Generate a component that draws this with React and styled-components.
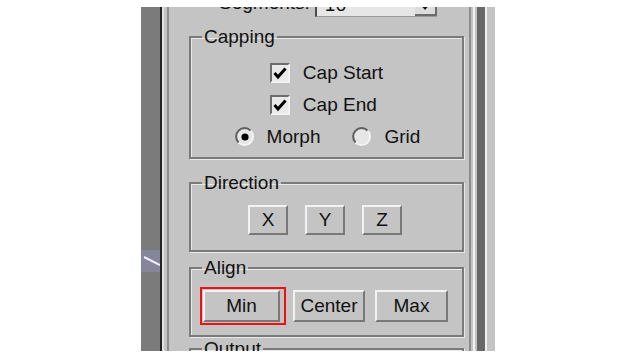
import React from 'react'
import styled, { createGlobalStyle } from 'styled-components'

const GlobalStyle = createGlobalStyle`
  html, body {
    margin: 0;
    padding: 0;
    background: #ffffff;
  }
  body {
    font-family: "Liberation Sans", Arial, sans-serif;
  }
`

const Page = styled.div`
  width: 635px;
  height: 364px;
  box-sizing: border-box;
  padding: 7px 0 0 141px;
  background: #ffffff;
`

const Panel = styled.div`
  display: flex;
  width: 354px;
  height: 344px;
  overflow: hidden;
  background: #c4c4c4;
`

const Viewport = styled.div`
  flex: none;
  width: 19px;
  display: flex;
  flex-direction: column;
  background: #7b7b7b;
`

const ViewportMark = styled.svg`
  margin-top: 243px;
  display: block;
`

const Divider = styled.div`
  flex: none;
  width: 2px;
  background: #232323;
`

const CommandPanel = styled.div`
  flex: 1;
  min-width: 0;
  border-right: 2px solid #f2f2f2;
  box-shadow: inset 2px 0 0 #e2e2e2;
`

const Rollout = styled.div`
  height: 100%;
  margin: 0 2px 0 5px;
  padding: 0 5px 0 20px;
  display: flex;
  flex-direction: column;
  border-left: 2px solid #8c8c8c;
  border-right: 2px solid #8c8c8c;
`

const Scrollbar = styled.div`
  flex: none;
  width: 8px;
  border-left: 2px solid #c4c4c4;
  background: #686868;
`

const RightStrip = styled.div`
  flex: none;
  width: 8px;
  border-left: 2px solid #f0f0f0;
  background: #c4c4c4;
`

const Text = styled.span`
  font-size: 19px;
  line-height: 20px;
  color: #111;
  white-space: nowrap;
`

const SpinnerRow = styled.div`
  flex: none;
  height: 20px;
  margin-top: -13px;
  padding-left: 30px;
  display: flex;
  align-items: flex-start;
  gap: 5px;
`

const SpinnerLabel = styled(Text)`
  margin-top: -1px;
`

const Field = styled.div`
  flex: none;
  width: 122px;
  height: 20px;
  margin-top: 3px;
  box-sizing: border-box;
  display: flex;
  align-items: flex-end;
  background: #e6e6e6;
  border-left: 2px solid #4a4a4a;
  border-bottom: 1px solid #9a9a9a;
`

const FieldValue = styled(Text)`
  flex: 1;
  padding-left: 8px;
  line-height: 18px;
  margin-bottom: 2px;
`

const DropButton = styled.div`
  width: 22px;
  height: 17px;
  box-sizing: border-box;
  display: flex;
  align-items: center;
  justify-content: center;
  background: #dcdcdc;
  border-right: 2px solid #6c6c6c;
  border-bottom: 2px solid #6c6c6c;
`

const Group = styled.fieldset`
  flex: none;
  margin: ${p => p.$mt}px 0 0;
  padding: ${p => p.$pt}px 0 ${p => p.$pb}px;
  min-width: 0;
  border: 2px solid #7a7a7a;
  box-shadow: 1px 1px 0 #e8e8e8, inset 1px 1px 0 #e8e8e8;
`

const Legend = styled.legend`
  margin-left: 11px;
  padding: 0 2px;
  font-size: 19px;
  line-height: 20px;
  color: #111;
`

const OptionColumn = styled.div`
  width: fit-content;
  margin: 0 auto;
  display: flex;
  flex-direction: column;
  align-items: flex-start;
`

const OptionRow = styled.label`
  height: 32px;
  display: flex;
  align-items: center;
  gap: ${p => p.$gap}px;
  margin-left: ${p => p.$ml || 0}px;
`

const RadioRow = styled.div`
  height: 32px;
  display: flex;
  align-items: center;
  justify-content: center;
  padding-left: 2px;
`

const CheckBox = styled.span`
  width: 20px;
  height: 20px;
  box-sizing: border-box;
  display: flex;
  align-items: center;
  justify-content: center;
  background: #e9e9e9;
  border: 2px solid;
  border-color: #6c6c6c #f2f2f2 #f2f2f2 #6c6c6c;
`

const ButtonRow = styled.div`
  display: flex;
  align-items: center;
  justify-content: ${p => p.$justify || 'center'};
  gap: ${p => p.$gap}px;
  padding-left: ${p => p.$pl || 0}px;
  padding-right: ${p => p.$pr || 0}px;
`

const Button = styled.div`
  width: ${p => p.$w}px;
  height: ${p => p.$h}px;
  margin-left: ${p => p.$ml || 0}px;
  box-sizing: border-box;
  display: flex;
  align-items: center;
  justify-content: center;
  font-size: 19px;
  color: #111;
  background: #c4c4c4;
  border: 2px solid;
  border-color: #f2f2f2 #787878 #787878 #f2f2f2;
`

const Highlight = styled.div`
  padding: 1px 4px 1px 1px;
  border: 2px solid #ee1111;
`

const Check = () => (
  <svg width="14" height="13" viewBox="0 0 14 13">
    <path d="M1.5 6 L5 10 L12.5 1.5" fill="none" stroke="#000" strokeWidth="3" />
  </svg>
)

const Radio = ({ checked }) => (
  <svg width="20" height="20" viewBox="0 0 20 20">
    <circle cx="10" cy="10" r="8" fill="#e6e6e6" />
    <path d="M3.6 15.6 A8 8 0 0 1 15.6 3.6" fill="none" stroke="#5e5e5e" strokeWidth="2" />
    <path d="M15.6 3.6 A8 8 0 0 1 3.6 15.6" fill="none" stroke="#f4f4f4" strokeWidth="2" />
    {checked && <circle cx="10" cy="10" r="3.6" fill="#000" />}
  </svg>
)

const options = [
  { label: 'Cap Start' },
  { label: 'Cap End' },
]

export default function App() {
  return (
    <Page>
      <GlobalStyle />
      <Panel>
        <Viewport>
          <ViewportMark width="19" height="22" viewBox="0 0 19 22">
            <rect x="0" y="0" width="19" height="22" fill="#8a8aaa" opacity="0.7" />
            <path d="M3 7 L19 15" stroke="#f0f0ff" strokeWidth="2" />
          </ViewportMark>
        </Viewport>
        <Divider />
        <CommandPanel>
          <Rollout>
            <SpinnerRow>
              <SpinnerLabel>Segments:</SpinnerLabel>
              <Field>
                <FieldValue>16</FieldValue>
                <DropButton>
                  <svg width="10" height="6" viewBox="0 0 10 6">
                    <path d="M0 0 H10 L5 6 Z" fill="#111" />
                  </svg>
                </DropButton>
              </Field>
            </SpinnerRow>

            <Group $mt={13} $pt={10} $pb={4}>
              <Legend>Capping</Legend>
              <OptionColumn>
                {options.map(o => (
                  <OptionRow key={o.label} $gap={13}>
                    <CheckBox><Check /></CheckBox>
                    <Text>{o.label}</Text>
                  </OptionRow>
                ))}
              </OptionColumn>
              <RadioRow>
                <OptionRow $gap={12}>
                  <Radio checked />
                  <Text>Morph</Text>
                </OptionRow>
                <OptionRow $gap={12} $ml={32}>
                  <Radio />
                  <Text>Grid</Text>
                </OptionRow>
              </RadioRow>
            </Group>

            <Group $mt={14} $pt={12} $pb={15}>
              <Legend>Direction</Legend>
              <ButtonRow $gap={17} $pr={3}>
                <Button $w={40} $h={30}>X</Button>
                <Button $w={40} $h={30}>Y</Button>
                <Button $w={40} $h={30}>Z</Button>
              </ButtonRow>
            </Group>

            <Group $mt={6} $pt={9} $pb={10}>
              <Legend>Align</Legend>
              <ButtonRow $justify="flex-start" $gap={7} $pl={9}>
                <Highlight>
                  <Button $w={77} $h={32}>Min</Button>
                </Highlight>
                <Button $w={72} $h={32}>Center</Button>
                <Button $w={73} $h={32} $ml={3}>Max</Button>
              </ButtonRow>
            </Group>

            <Group $mt={2} $pt={10} $pb={10}>
              <Legend>Output</Legend>
            </Group>
          </Rollout>
        </CommandPanel>
        <Scrollbar />
        <RightStrip />
      </Panel>
    </Page>
  )
}
